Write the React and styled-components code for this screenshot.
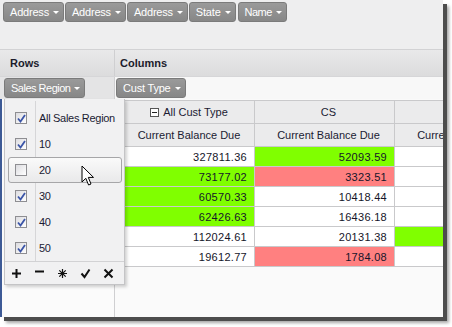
import React from "react";
import styled, { createGlobalStyle } from "styled-components";

// GLOBAL

const Global = createGlobalStyle`
    html, body {
        margin: 0;
        padding: 0;
        background: #ffffff;
    }
    body {
        font-family: "Liberation Sans", Arial, sans-serif;
        font-size: 11px;
        color: #1b1b33;
    }
`;

// STYLING

const Page = styled.div`
    width: 452px;
    height: 327px;
    background: #ffffff;
`;

const Frame = styled.div`
    position: relative;
    width: 443px;
    height: 317px;
    overflow: hidden;
    background: #fafafa;
    display: flex;
    flex-flow: column nowrap;
    box-shadow: 4px 4px 0 #4d4d4d, 6px 6px 3px rgba(0, 0, 0, 0.35);
`;

const FieldArea = styled.div`
    height: 50px;
    flex: none;
    background: #eeeeef;
    border-bottom: 1px solid #d2d2d4;
    display: flex;
    align-items: flex-start;
    gap: 1px;
    padding: 2px 0 0 3px;
    box-sizing: border-box;
`;

const FieldButton = styled.div`
    height: 20px;
    box-sizing: border-box;
    display: flex;
    align-items: center;
    gap: 4px;
    padding: 0 4px 0 6px;
    margin-right: ${(p) => p.$gap || 0}px;
    background: linear-gradient(#9a9a9a, #878787);
    border: 1px solid #7b7b7b;
    border-radius: 3px;
    color: #ffffff;
    font-size: 11px;
    letter-spacing: ${(p) => (p.$tight ? "-0.5px" : "-0.2px")};
    white-space: nowrap;
    flex: none;
`;

const Caret = styled.span`
    width: 0;
    height: 0;
    border-left: 3px solid transparent;
    border-right: 3px solid transparent;
    border-top: 3px solid #ffffff;
    margin-top: 1px;
`;

const HeaderBand = styled.div`
    height: 26px;
    flex: none;
    display: flex;
    background: linear-gradient(#e9e9ea, #dcdcdd);
    border-bottom: 1px solid #d6d6d8;
`;

const ZoneTitle = styled.div`
    width: ${(p) => p.$w || "auto"};
    flex: ${(p) => (p.$w ? "none" : "1")};
    box-sizing: border-box;
    display: flex;
    align-items: center;
    padding-left: ${(p) => p.$pad}px;
    font-weight: bold;
    font-size: 11px;
    color: #1c1c2c;
    border-right: ${(p) => (p.$w ? "1px solid #cfcfd1" : "none")};
`;

const DropRow = styled.div`
    height: 22px;
    flex: none;
    display: flex;
`;

const DropZone = styled.div`
    width: ${(p) => p.$w || "auto"};
    flex: ${(p) => (p.$w ? "none" : "1")};
    box-sizing: border-box;
    background: ${(p) => (p.$w ? "#e4e4e5" : "#f8f8f8")};
    border-right: ${(p) => (p.$w ? "1px solid #cfcfd1" : "none")};
    display: flex;
    align-items: center;
    padding-left: ${(p) => p.$pad}px;
`;

const Body = styled.div`
    flex: 1;
    display: flex;
    min-height: 0;
`;

const RowHeaderSide = styled.div`
    width: 115px;
    flex: none;
    box-sizing: border-box;
    background: #fbfbfb;
    border-left: 2px solid #3d5a96;
    border-right: 1px solid #cfcfd1;
`;

const GridArea = styled.div`
    flex: 1;
    padding-top: 1px;
    background: #fafafa;
`;

const Grid = styled.table`
    border-collapse: collapse;
    table-layout: fixed;
    width: 420px;
    font-size: 11px;
    td, th {
        border: 1px solid #c9c9cb;
        padding: 0;
        box-sizing: border-box;
    }
`;

const HeadCell = styled.th`
    height: 23px;
    font-weight: normal;
    text-align: center;
    background: #ebebec;
    color: #1b1b33;
    padding-left: 8px !important;
    white-space: nowrap;
    overflow: hidden;
`;

const Cell = styled.td`
    height: 20px;
    text-align: right;
    padding-right: 7px !important;
    color: #15152a;
    letter-spacing: 0.3px;
    background: ${(p) =>
        p.$tone === "good" ? "#80ff00" : p.$tone === "bad" ? "#ff8080" : "#ffffff"};
`;

const Collapse = styled.span`
    display: inline-block;
    width: 7px;
    height: 7px;
    border: 1px solid #555;
    background: #fff;
    position: relative;
    margin-right: 4px;
    vertical-align: -1px;
    &::after {
        content: "";
        position: absolute;
        left: 1px;
        right: 1px;
        top: 3px;
        height: 1px;
        background: #222;
    }
`;

// popup

const Popup = styled.div`
    position: absolute;
    left: 4px;
    top: 99px;
    width: 119px;
    background: #f1f1f2;
    border: 1px solid #c4c4c6;
    border-top: none;
    box-shadow: 2px 2px 3px rgba(0, 0, 0, 0.18);
    display: flex;
    flex-flow: column nowrap;
`;

const List = styled.div`
    position: relative;
    padding: 6px 0 0;
    &::before {
        content: "";
        position: absolute;
        left: 30px;
        top: 2px;
        bottom: 0;
        width: 1px;
        background: #d6d6d8;
    }
`;

const Item = styled.div`
    height: 26px;
    box-sizing: border-box;
    display: flex;
    align-items: center;
    margin: 0 2px 0 3px;
    border: 1px solid ${(p) => (p.$hot ? "#a6a6a8" : "transparent")};
    border-radius: 3px;
    background: ${(p) => (p.$hot ? "linear-gradient(#fafafa, #e9e9ea)" : "transparent")};
    font-size: 11px;
    letter-spacing: -0.3px;
    white-space: nowrap;
    color: #1b1b33;
    position: relative;
`;

const Box = styled.span`
    width: 12px;
    height: 12px;
    box-sizing: border-box;
    border: 1px solid #8e8e92;
    background: linear-gradient(135deg, #dcdce0, #ffffff);
    margin: 0 12px 0 6px;
    display: flex;
    align-items: center;
    justify-content: center;
    flex: none;
`;

const Tools = styled.div`
    border-top: 1px solid #d2d2d4;
    height: 22px;
    display: flex;
    align-items: center;
    justify-content: space-between;
    padding: 0 10px 0 6px;
`;

const Pointer = styled.svg`
    position: absolute;
    left: 81px;
    top: 165px;
`;

const Check = () => (
    <svg width="9" height="9" viewBox="0 0 9 9">
        <path d="M1 4.5 L3.5 7.5 L8 1" fill="none" stroke="#3b55a8" strokeWidth="1.8" />
    </svg>
);

const ToolIcon = ({ kind }) => {
    const s = { fill: "none", stroke: "#111", strokeWidth: 2 };
    return (
        <svg width="11" height="11" viewBox="0 0 11 11">
            {kind === "plus" && <path d="M5.5 1 V10 M1 5.5 H10" {...s} />}
            {kind === "minus" && <path d="M1 3.5 H10" {...s} />}
            {kind === "star" && (
                <path
                    d="M5.5 1 V10 M2.3 2.3 L8.7 8.7 M2.3 8.7 L8.7 2.3 M1 5.5 H10"
                    {...s}
                    strokeWidth="1.2"
                />
            )}
            {kind === "check" && <path d="M1.5 5.5 L4.5 9 L9.5 1.5" {...s} />}
            {kind === "cross" && <path d="M1.5 1.5 L9.5 9.5 M9.5 1.5 L1.5 9.5" {...s} />}
        </svg>
    );
};

// DATA

const rows = [
    [["327811.36"], ["52093.59", "good"], [""]],
    [["73177.02", "good"], ["3323.51", "bad"], [""]],
    [["60570.33", "good"], ["10418.44"], [""]],
    [["62426.63", "good"], ["16436.18"], [""]],
    [["112024.61"], ["20131.38"], ["", "good"]],
    [["19612.77"], ["1784.08", "bad"], [""]],
];

const regions = [
    { label: "All Sales Region", on: true },
    { label: "10", on: true },
    { label: "20", on: false, hot: true },
    { label: "30", on: true },
    { label: "40", on: true },
    { label: "50", on: true },
];

const App = () => {
    return (
        <Page>
            <Global />
            <Frame>
                <FieldArea>
                    <FieldButton>Address<Caret /></FieldButton>
                    <FieldButton>Address<Caret /></FieldButton>
                    <FieldButton>Address<Caret /></FieldButton>
                    <FieldButton $gap={1}>State<Caret /></FieldButton>
                    <FieldButton $tight>Name<Caret /></FieldButton>
                </FieldArea>
                <HeaderBand>
                    <ZoneTitle $w="115px" $pad={10}>Rows</ZoneTitle>
                    <ZoneTitle $pad={5}>Columns</ZoneTitle>
                </HeaderBand>
                <DropRow>
                    <DropZone $w="115px" $pad={4}>
                        <FieldButton $tight>Sales Region<Caret /></FieldButton>
                    </DropZone>
                    <DropZone $pad={1}>
                        <FieldButton>Cust Type<Caret /></FieldButton>
                    </DropZone>
                </DropRow>
                <Body>
                    <RowHeaderSide />
                    <GridArea>
                        <Grid>
                            <colgroup>
                                <col style={{ width: 139 }} />
                                <col style={{ width: 140 }} />
                                <col style={{ width: 140 }} />
                            </colgroup>
                            <thead>
                                <tr>
                                    <HeadCell><Collapse />All Cust Type</HeadCell>
                                    <HeadCell>CS</HeadCell>
                                    <HeadCell></HeadCell>
                                </tr>
                                <tr>
                                    <HeadCell>Current Balance Due</HeadCell>
                                    <HeadCell>Current Balance Due</HeadCell>
                                    <HeadCell>Current Balance Due</HeadCell>
                                </tr>
                            </thead>
                            <tbody>
                                {rows.map((r, i) => (
                                    <tr key={i}>
                                        {r.map(([v, tone], j) => (
                                            <Cell key={j} $tone={tone}>{v}</Cell>
                                        ))}
                                    </tr>
                                ))}
                            </tbody>
                        </Grid>
                    </GridArea>
                </Body>

                <Popup>
                    <List>
                        {regions.map((r) => (
                            <Item key={r.label} $hot={r.hot}>
                                <Box>{r.on && <Check />}</Box>
                                {r.label}
                            </Item>
                        ))}
                    </List>
                    <Tools>
                        <ToolIcon kind="plus" />
                        <ToolIcon kind="minus" />
                        <ToolIcon kind="star" />
                        <ToolIcon kind="check" />
                        <ToolIcon kind="cross" />
                    </Tools>
                </Popup>

                <Pointer width="14" height="22" viewBox="0 0 14 22">
                    <path
                        d="M1 1 L1 17 L4.8 13.3 L7.6 20 L10 19 L7.3 12.4 L12.5 12.4 Z"
                        fill="#ffffff"
                        stroke="#000000"
                        strokeWidth="1"
                        strokeLinejoin="miter"
                    />
                </Pointer>
            </Frame>
        </Page>
    );
};

export default App;
